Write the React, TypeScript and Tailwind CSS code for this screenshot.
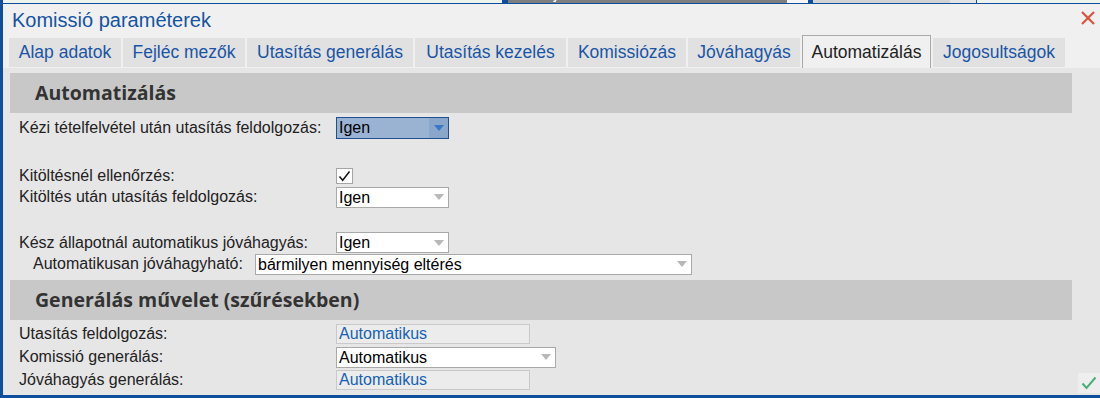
import React from 'react';

const tabs = [
    { label: 'Alap adatok', w: 'w-[112px]' },
    { label: 'Fejléc mezők', w: 'w-[122px]' },
    { label: 'Utasítás generálás', w: 'w-[166px]' },
    { label: 'Utasítás kezelés', w: 'w-[151px]' },
    { label: 'Komissiózás', w: 'w-[118px]' },
    { label: 'Jóváhagyás', w: 'w-[112px]' },
    { label: 'Automatizálás', w: 'w-[129px]', active: true },
    { label: 'Jogosultságok', w: 'w-[132px]' },
];

const Arrow = ({ color = '#b8b8b8' }: { color?: string }) => (
    <svg width="10" height="6" viewBox="0 0 10 6">
        <path d="M0 0h10L5 6z" fill={color} />
    </svg>
);

const Select = ({ value, w, focused = false }: { value: string; w: string; focused?: boolean }) =>
    focused ? (
        <div className={`${w} h-[22px] flex items-stretch border border-[#1d4f91] bg-[#9ab3d2]`}>
            <span className="flex-1 pl-[2px] leading-[20px] text-[16px] text-black">{value}</span>
            <span className="w-[19px] flex items-center justify-center bg-[#8aa6ca]">
                <Arrow color="#3b78c4" />
            </span>
        </div>
    ) : (
        <div className={`${w} h-[21px] flex items-center border border-[#a9a9a9] bg-white`}>
            <span className="flex-1 pl-[2px] leading-[19px] text-[16px] text-black">{value}</span>
            <span className="w-[19px] flex items-center justify-center">
                <Arrow />
            </span>
        </div>
    );

const ReadOnly = ({ value }: { value: string }) => (
    <div className="w-[194px] h-[20px] border border-[#c9c9c9] bg-[#ececec] pl-[2px] leading-[18px] text-[16px] text-[#1461b5]">
        {value}
    </div>
);

const SectionHeader = ({ title }: { title: string }) => (
    <div className="w-[1062px] h-[40px] bg-[#c8c8c8] pl-[25px] flex items-center">
        <span className="text-[19.5px] font-bold text-[#333]" style={{ fontFamily: '"Open Sans", sans-serif' }}>
            {title}
        </span>
    </div>
);

const Row = ({ label, h, children, indent = false }: { label: string; h: string; children: React.ReactNode; indent?: boolean }) => (
    <div className={`flex items-center ${h}`}>
        <span className={indent ? 'w-[245px] pl-[23px]' : 'w-[326px] pl-[9px]'}>{label}</span>
        {children}
    </div>
);

export default function App() {
    return (
        <div className="w-[1100px] h-[398px] flex flex-col overflow-hidden bg-[#eef3ee] text-[16px] text-[#222]" style={{ fontFamily: '"Liberation Sans", Arial, sans-serif' }}>
            {/* window behind the dialog, only its bottom edge shows */}
            <div className="h-[3px] flex overflow-hidden">
                <div className="w-[3px] bg-[#0d4f9c]" />
                <div className="w-[499px]" />
                <div className="w-[6px] bg-[#0d4f9c]" />
                <div className="w-[279px] bg-[#7e7e7e] overflow-hidden">
                    <div className="-mt-[14px] pl-[27px] text-[16px] leading-[16px] text-white">Fejléc módosítás</div>
                </div>
                <div className="w-[21px] bg-[#f7f7f7]" />
                <div className="w-[5px] bg-[#0d4f9c]" />
                <div className="w-[137px] bg-[#d3d3d3] overflow-hidden">
                    <div className="-mt-[14px] pl-[12px] text-[16px] leading-[16px] text-[#333]">Rendelésszám</div>
                </div>
                <div className="w-[26px] bg-[#e4e4e4]" />
                <div className="w-[1px] bg-[#0d4f9c]" />
            </div>

            <div className="flex-1 flex flex-col border-l-[3px] border-t border-b-[3px] border-[#0d4f9c] bg-[#f0f0f0]">
                {/* title */}
                <div className="h-[31px] flex items-start justify-between pl-[9px] pr-[4px]">
                    <span className="mt-[4px] text-[20px] leading-[24px] text-[#1553a3]">Komissió paraméterek</span>
                    <svg className="mt-[6px]" width="16" height="16" viewBox="0 0 16 16">
                        <path d="M2 2l12 12M14 2L2 14" stroke="#d8533f" strokeWidth="2.2" />
                    </svg>
                </div>

                {/* tabs */}
                <div className="h-[33px] flex items-end gap-[2px] pl-[6px]">
                    {tabs.map((t) =>
                        t.active ? (
                            <div key={t.label} className={`${t.w} h-[33px] flex items-center justify-center border border-b-0 border-[#a9a9a9] bg-[#f0f0f0] text-[17.5px] text-[#222]`}>
                                {t.label}
                            </div>
                        ) : (
                            <div key={t.label} className={`${t.w} h-[29px] mb-[1px] flex items-center justify-center bg-[#e1e1e1] text-[17.5px] text-[#1a55a5]`}>
                                {t.label}
                            </div>
                        )
                    )}
                </div>

                {/* content */}
                <div className="flex-1 flex bg-[#e6e6e6]">
                    <div className="flex-1 flex flex-col pl-[7px] pt-[5px]">
                        <SectionHeader title="Automatizálás" />
                        <div className="mt-[4px]">
                            <Row label="Kézi tételfelvétel után utasítás feldolgozás:" h="h-[22px]">
                                <Select value="Igen" w="w-[113px]" focused />
                            </Row>
                        </div>
                        <div className="mt-[27px]">
                            <Row label="Kitöltésnél ellenőrzés:" h="h-[20px]">
                                <div className="w-[17px] h-[16px] border border-[#a5a5a5] bg-white flex items-center justify-center">
                                    <svg width="13" height="12" viewBox="0 0 13 12">
                                        <path d="M1.5 6.5l3.2 3.8L11.5 1.5" stroke="#111" strokeWidth="1.5" fill="none" />
                                    </svg>
                                </div>
                            </Row>
                        </div>
                        <Row label="Kitöltés után utasítás feldolgozás:" h="h-[22px]">
                            <Select value="Igen" w="w-[113px]" />
                        </Row>
                        <div className="mt-[24px]">
                            <Row label="Kész állapotnál automatikus jóváhagyás:" h="h-[21px]">
                                <Select value="Igen" w="w-[113px]" />
                            </Row>
                        </div>
                        <Row label="Automatikusan jóváhagyható:" h="h-[22px]" indent>
                            <Select value="bármilyen mennyiség eltérés" w="w-[437px]" />
                        </Row>
                        <div className="mt-[5px]">
                            <SectionHeader title="Generálás művelet (szűrésekben)" />
                        </div>
                        <div className="mt-[4px] flex flex-col gap-[3px]">
                            <Row label="Utasítás feldolgozás:" h="h-[20px]">
                                <ReadOnly value="Automatikus" />
                            </Row>
                            <Row label="Komissió generálás:" h="h-[20px]">
                                <Select value="Automatikus" w="w-[220px]" />
                            </Row>
                            <Row label="Jóváhagyás generálás:" h="h-[20px]">
                                <ReadOnly value="Automatikus" />
                            </Row>
                        </div>
                    </div>
                    <div className="w-[22px] flex flex-col justify-end pb-[2px]">
                        <div className="h-[20px] bg-[#eeeeee] flex items-center justify-center">
                            <svg width="16" height="14" viewBox="0 0 16 14">
                                <path d="M1.5 7.5l4 4.5L14.5 1.5" stroke="#4aae78" strokeWidth="2" fill="none" />
                            </svg>
                        </div>
                    </div>
                </div>
            </div>
        </div>
    );
}
